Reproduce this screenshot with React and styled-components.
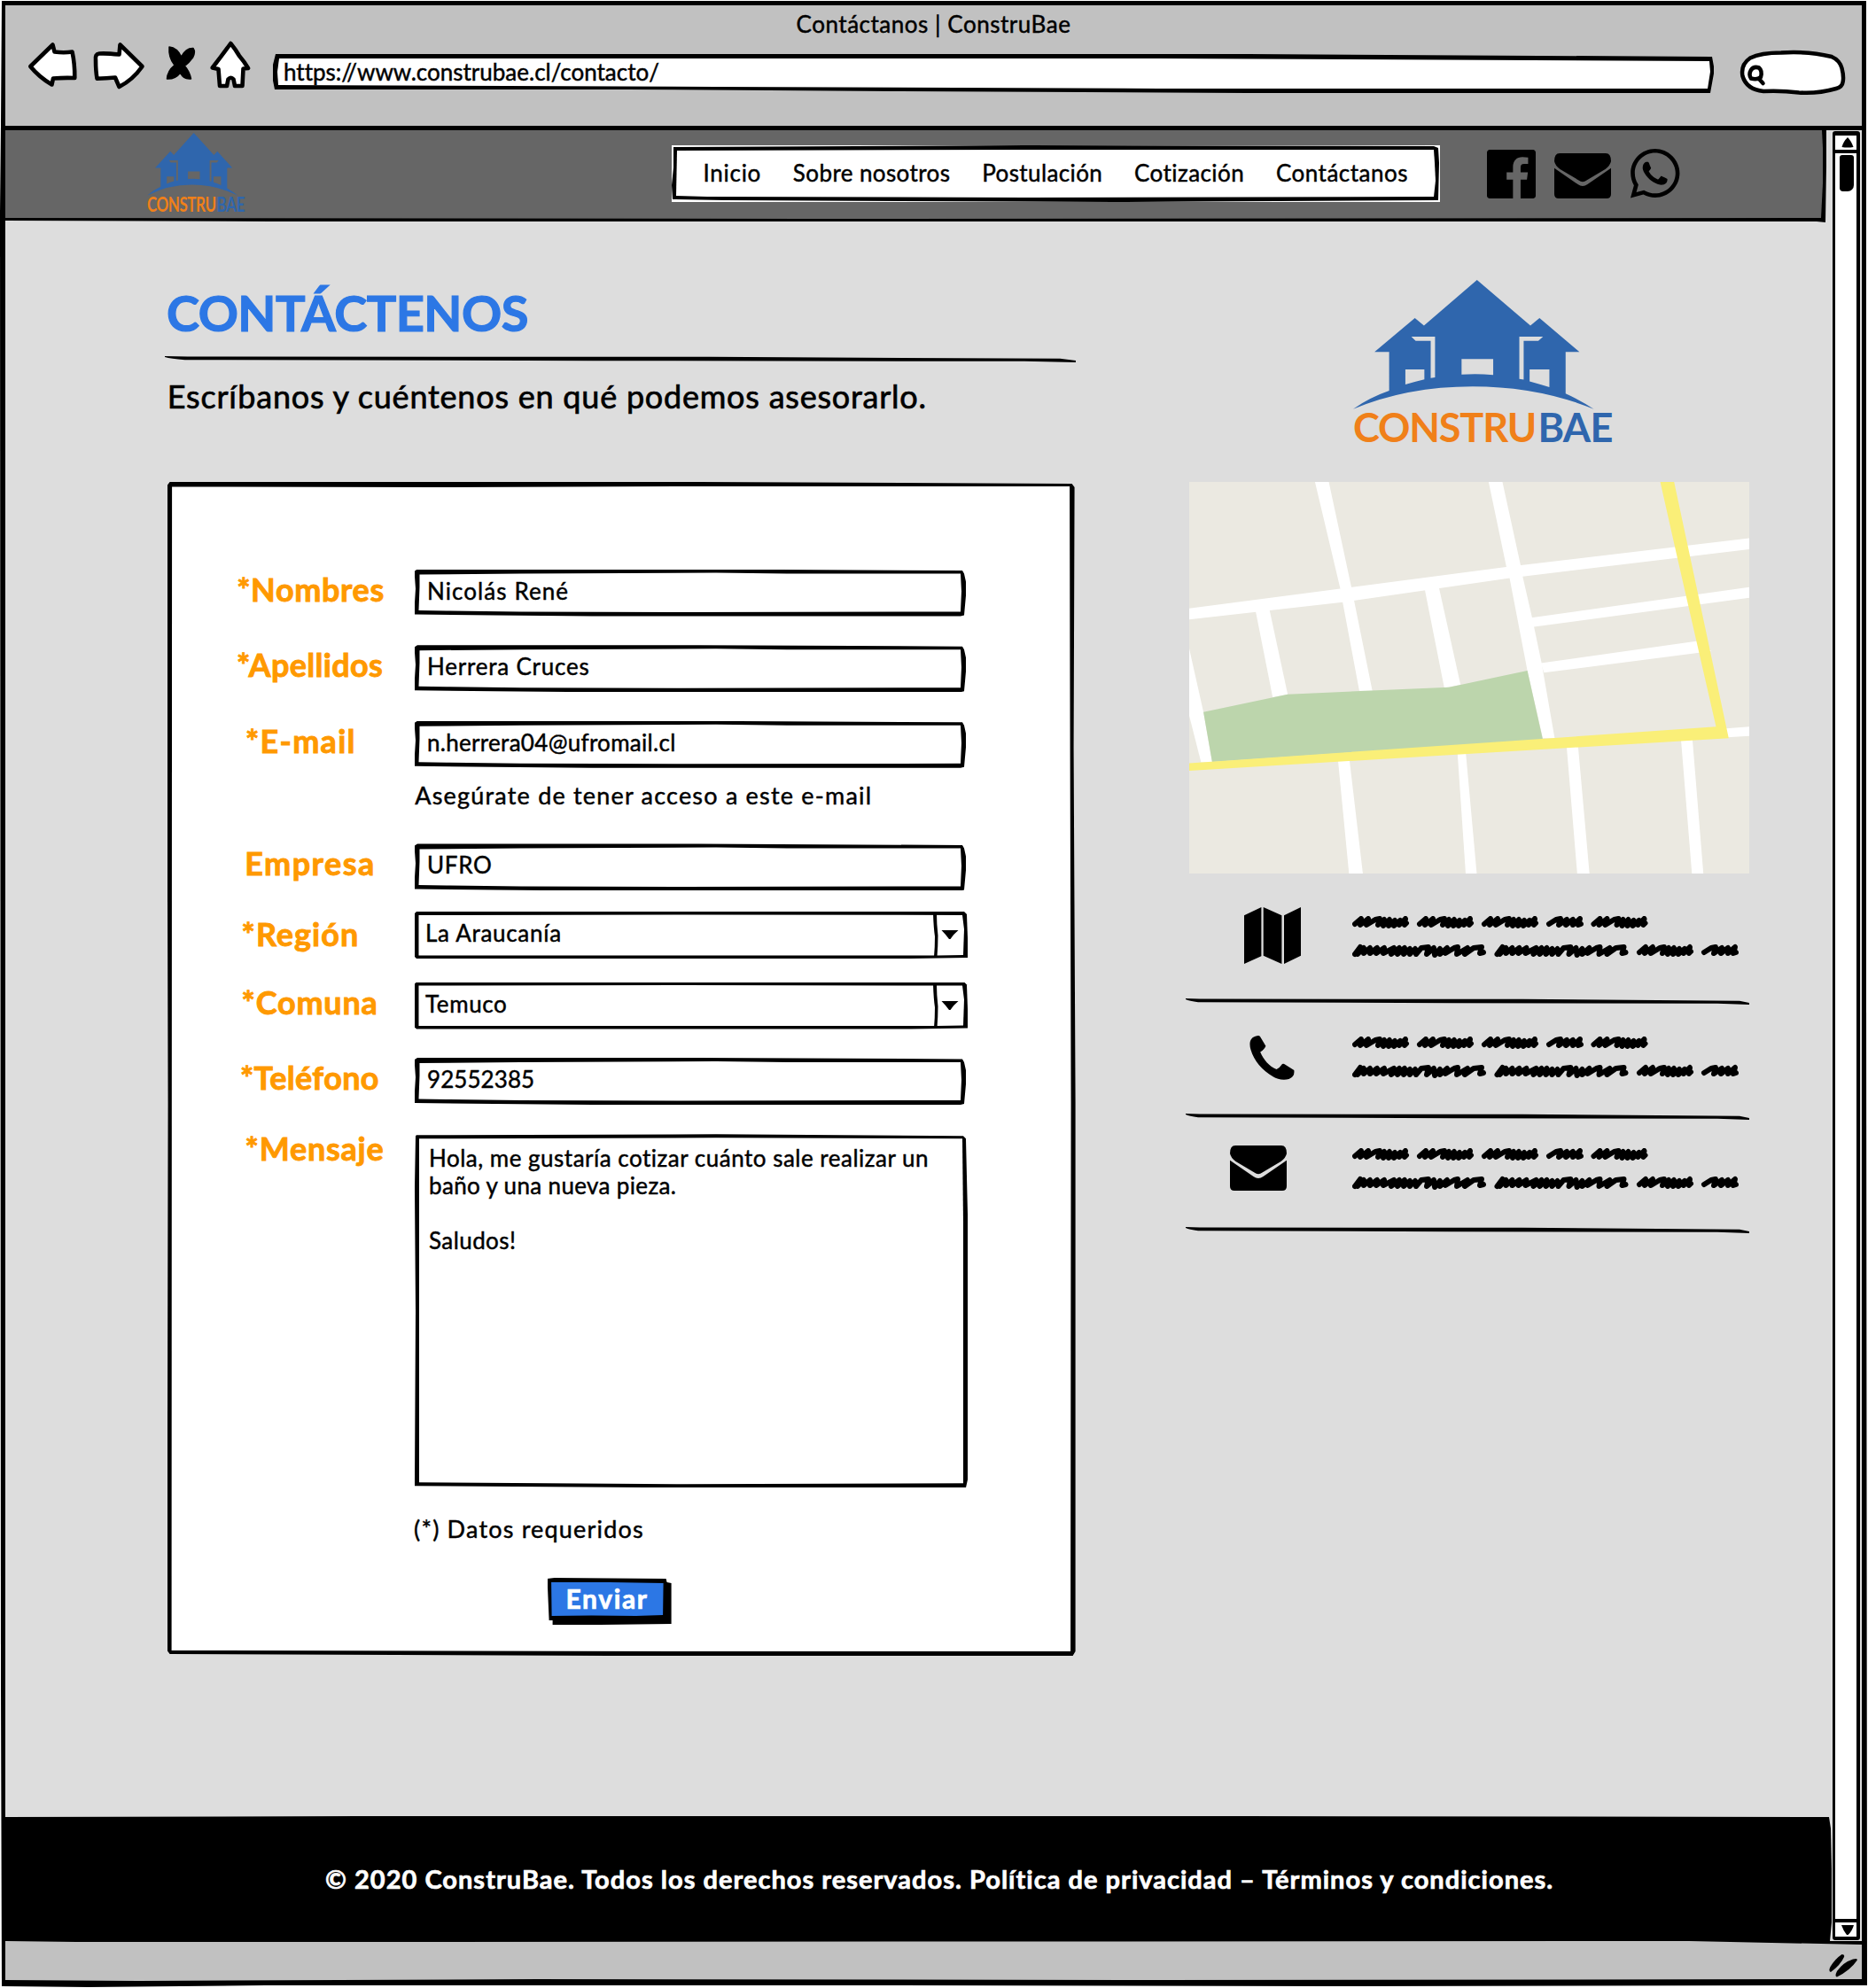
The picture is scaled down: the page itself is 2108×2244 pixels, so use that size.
import React from 'react';
import styled, { createGlobalStyle, css } from 'styled-components';
import { FaWhatsapp } from 'react-icons/fa';

const INK = '#000';
const BLUE = '#2c77e5';
const ORANGE = '#ff9900';
const LOGO_BLUE = '#2f66ad';
const LOGO_ORANGE = '#f08019';

const GlobalStyle = createGlobalStyle`
  * { box-sizing: border-box; }
  body {
    margin: 0;
    background: #fff;
    color: ${INK};
    font-family: Lato, 'Open Sans', sans-serif;
    font-size: 26px;
    font-variant-ligatures: none;
  }
  svg { display: block; flex: none; }
`;

/* Hand-drawn box: a black outer shape with a slightly uneven filled shape on top. */
const sketch = ({ fill, outer, inner }) => css`
  position: relative;
  isolation: isolate;
  &::before,
  &::after {
    content: '';
    position: absolute;
    inset: 0;
    z-index: -1;
  }
  &::before {
    background: ${INK};
    clip-path: polygon(${outer});
  }
  &::after {
    background: ${fill};
    clip-path: polygon(${inner});
  }
`;

const text = css`
  margin: 0;
  white-space: nowrap;
  letter-spacing: ${({ $track = 0.4 }) => $track}px;
  -webkit-text-stroke: 0.45px currentColor;
`;

/* ---------- window ---------- */

const Window = styled.div`
  width: 2108px;
  height: 2244px;
  padding: 6px 7px 8px 6px;
  display: flex;
  flex-direction: column;
  ${sketch({
    fill: 'transparent',
    outer:
      '2px 1px, 2106px 1px, 2106px 1100px, 2107px 2241px, 1500px 2242px, 1000px 2241px, 300px 2241px, 100px 2243px, 2px 2242px, 1px 1900px, 0px 240px, 1px 140px',
    inner: '0 0',
  })}
`;

const Toolbar = styled.header`
  height: 141px;
  background: #c1c1c1;
  border-bottom: 5px solid ${INK};
  flex: none;
`;

const WindowTitle = styled.div`
  ${text}
  height: 39px;
  line-height: 42px;
  text-align: center;
`;

const BrowserRow = styled.div`
  display: flex;
  align-items: flex-start;
  padding-left: 24px;
`;

const ToolIcon = styled.svg`
  width: ${({ $w }) => $w}px;
  height: 56px;
  margin: 1px ${({ $after }) => $after}px 0 0;
  fill: #fff;
  stroke: ${INK};
  stroke-width: 4.6;
  stroke-linejoin: round;
`;

const AddressBar = styled.div`
  ${text}
  width: 1626px;
  height: 45px;
  margin-top: 16px;
  padding-left: 12px;
  line-height: 40px;
  ${sketch({
    fill: '#fff',
    outer:
      '3px 0, 900px 0, 1100px 0, 1624px 3px, 1626px 14px, 1626px 22px, 1622px 44px, 1100px 44px, 700px 42px, 400px 40px, 2px 40px, 0 30px, 0 12px',
    inner:
      '7px 5px, 1000px 5px, 1621px 8px, 1622px 20px, 1619px 39px, 1000px 39px, 500px 37px, 6px 35px, 5px 20px',
  })}
`;

const SearchPill = styled.svg`
  width: 122px;
  height: 54px;
  margin: 10px 0 0 28px;
  fill: #fff;
  stroke: ${INK};
  stroke-width: 4.5;
  stroke-linecap: round;
`;

const Viewport = styled.div`
  flex: 1;
  min-height: 0;
  display: flex;
  background: #ddd;
`;

const Page = styled.div`
  width: 2061px;
  display: flex;
  flex-direction: column;
`;

const StatusBar = styled.div`
  height: 45px;
  flex: none;
  display: flex;
  justify-content: flex-end;
  padding: 14px 3px 0 0;
  ${sketch({
    fill: '#c1c1c1',
    outer: '0 0, 100% 0, 100% 100%, 0 100%',
    inner: '0 0, 80px 1px, 400px 1px, 1900px 0, 2095px 4px, 2095px 43px, 1300px 44px, 600px 43px, 150px 45px, 0 44px',
  })}
`;

/* ---------- scroll bar ---------- */

const Scrollbar = styled.div`
  width: 31px;
  height: 2042px;
  margin: 1px 0 0 1px;
  background: #fff;
  border: 3px solid ${INK};
  border-top-width: 5px;
  border-bottom-width: 4px;
  border-right-width: 4px;
  border-radius: 3px;
  display: flex;
  flex-direction: column;
  align-items: center;
`;

const ScrollArrow = styled.div`
  align-self: stretch;
  height: 20px;
  display: flex;
  align-items: center;
  justify-content: center;
  padding-left: 3px;
  border: 0 solid ${INK};
  border-width: ${({ $down }) => ($down ? '4px 0 0' : '0 0 4px')};
`;

const Thumb = styled.div`
  width: 16px;
  height: 41px;
  margin: 2px 0 auto 2px;
  background: ${INK};
  border-radius: 3px 3px 7px 4px;
`;

/* ---------- site header ---------- */

const SiteHeader = styled.div`
  width: 2055px;
  height: 104px;
  flex: none;
  display: flex;
  align-items: flex-start;
  padding: 3px 0 0 160px;
  ${sketch({
    fill: '#666',
    outer: '0 0, 2055px 0, 2055px 40px, 2054px 104px, 2044px 103px, 300px 103px, 0 102px',
    inner: '0 0, 2050px 0, 2051px 20px, 2051px 60px, 2049px 99px, 900px 100px, 0 99px',
  })}
`;

const Menu = styled.nav`
  width: 867px;
  height: 64px;
  margin: 14px 53px 0 482px;
  padding-left: 35.5px;
  display: flex;
  gap: 35.8px;
  background: #fff;
  ${sketch({
    fill: '#fff',
    outer: '2px 2px, 400px 0, 860px 1px, 865px 3px, 866px 20px, 865px 62px, 500px 64px, 60px 62px, 1px 61px, 0 45px, 2px 25px',
    inner: '6px 6px, 400px 5px, 860px 5px, 861px 20px, 862px 40px, 860px 58px, 400px 59px, 40px 58px, 5px 57px',
  })}
`;

const MenuItem = styled.a`
  ${text}
  line-height: 62px;
`;

const SocialLinks = styled.div`
  display: flex;
  align-items: flex-start;
  padding-top: 19px;
`;

const Facebook = styled.svg`
  width: 55px;
  height: 55px;
  margin-right: 21px;
`;

const Envelope = styled.svg`
  width: 64px;
  height: 51px;
`;

const HeaderEnvelope = styled(Envelope)`
  margin: 4px 18px 0 0;
`;

const WhatsappSlot = styled.span`
  display: flex;
  margin-top: -5px;
`;

/* ---------- main ---------- */

const Main = styled.main`
  flex: 1;
  display: flex;
  align-items: flex-start;
  gap: 124px;
  padding: 65px 0 0 180px;
`;

const FormColumn = styled.section`
  width: 1028px;
`;

const Heading = styled.h1`
  ${text}
  -webkit-text-stroke-width: 1.2px;
  height: 86px;
  padding-left: 2px;
  color: ${BLUE};
  font-size: 56px;
  font-weight: 700;
  line-height: 73px;
`;

const Rule = styled.svg`
  width: 100%;
  height: 7px;
`;

const Lead = styled.p`
  ${text}
  -webkit-text-stroke-width: 0.7px;
  padding-left: 2.8px;
  margin: 16px 0 75px;
  font-size: 36px;
  line-height: 44px;
`;

const Card = styled.form`
  width: 1025px;
  height: 1325px;
  margin-left: 2.6px;
  padding-top: 98.5px;
  ${sketch({
    fill: '#fff',
    outer:
      '3px 0, 600px 0, 1021px 2px, 1024px 6px, 1023px 300px, 1025px 700px, 1025px 1320px, 1022px 1325px, 500px 1325px, 3px 1323px, 0 1319px, 1px 700px, 0 300px, 0 4px',
    inner: '5.5px 5.5px, 300px 6px, 600px 5px, 1018.5px 5px, 1019px 300px, 1020px 700px, 1019.5px 1320px, 600px 1320px, 5px 1319px',
  })}
`;

const FormRow = styled.div`
  display: grid;
  grid-template-columns: 279.4px 624px;
  margin-bottom: ${({ $after }) => $after}px;
`;

const Label = styled.label`
  ${text}
  -webkit-text-stroke-width: 0.9px;
  padding-left: ${({ $indent }) => $indent}px;
  margin-top: ${({ $shift = 0 }) => $shift}px;
  color: ${ORANGE};
  font-size: 36px;
  font-weight: 700;
  line-height: 45px;
  height: 45px;
`;

const Field = styled.div`
  ${text}
  width: 622px;
  height: 53px;
  padding-left: 14px;
  line-height: 49px;
  ${sketch({
    fill: '#fff',
    outer:
      '3px 0, 320px 0, 618px 1.5px, 620px 5px, 622px 14px, 622px 30px, 620px 52px, 616px 53px, 200px 53px, 90px 52px, 0 51px, 0 38px, 1px 22px, 0 8px, 0 2px',
    inner:
      '5.5px 6px, 120px 5px, 340px 4px, 420px 5px, 616px 5px, 617px 25px, 616px 48px, 300px 48.5px, 120px 48px, 36px 47px, 4.5px 46.5px, 5.5px 20px',
  })}
`;

const Select = styled.div`
  width: 624px;
  height: 53px;
  display: flex;
  ${sketch({
    fill: '#fff',
    outer: '2px 0, 620px 0, 623px 3px, 624px 30px, 624px 52px, 560px 53px, 2px 53px, 0 51px, 0 2px',
    inner: '4.5px 4px, 300px 3.5px, 618px 4px, 620px 20px, 619px 49px, 590px 49.5px, 4.5px 49.5px',
  })}
`;

const SelectValue = styled.span`
  ${text}
  flex: 1;
  padding-left: 12px;
  line-height: 48px;
`;

const Caret = styled.svg`
  width: 39px;
  height: 53px;
`;

const TextArea = styled.div`
  width: 624px;
  height: 399px;
  padding: 11.5px 0 0 16px;
  ${sketch({
    fill: '#fff',
    outer:
      '2px 1px, 340px 0, 619px 2px, 622px 5px, 624px 90px, 624px 200px, 624px 390px, 622px 399px, 300px 399px, 0 397px, 1px 200px, 0 60px, 1px 2px',
    inner: '5px 5px, 340px 4px, 618px 5px, 619px 100px, 619px 200px, 619px 394px, 300px 395px, 5px 393px, 5px 200px',
  })}
`;

const MessageLine = styled.div`
  ${text}
  height: 31.2px;
  line-height: 31.2px;
`;

const Hint = styled.p`
  ${text}
  padding-left: ${({ $indent }) => $indent}px;
  margin: 0 0 ${({ $after }) => $after}px;
  font-size: 27px;
  line-height: 34px;
`;

const SubmitButton = styled.div`
  ${text}
  -webkit-text-stroke-width: 0.7px;
  width: 141px;
  height: 53px;
  margin-left: 429px;
  padding-left: 21px;
  color: #fff;
  font-size: 30px;
  font-weight: 700;
  line-height: 47px;
  ${sketch({
    fill: BLUE,
    outer:
      '0 1px, 8px 0, 134px 1px, 135px 5px, 140px 6px, 140px 52px, 60px 53px, 6px 53px, 6px 48px, 2px 48px, 1px 25px',
    inner: '4.5px 5px, 70px 5px, 131px 6px, 130.5px 42px, 100px 43px, 50px 42.5px, 5px 43px',
  })}
`;

/* ---------- side column ---------- */

const SideColumn = styled.aside`
  width: 636px;
`;

const BigLogoSlot = styled.div`
  padding: 0 0 43px 188.7px;
`;

const LogoDrawing = styled.svg`
  overflow: visible;
  font-family: Lato, 'Open Sans', sans-serif;
  font-size: 101px;
  font-weight: 700;
`;

const MapView = styled.svg`
  width: 632px;
  height: 442px;
  margin-left: 4px;
`;

const ContactItem = styled.div`
  height: ${({ $h }) => $h}px;
  display: grid;
  grid-template-columns: 188px 1fr;
  align-items: start;
`;

const ContactIcon = styled.div`
  padding: ${({ $y }) => $y}px 0 0 ${({ $x }) => $x}px;
`;

const ContactText = styled.svg`
  width: 440px;
  height: 48px;
  margin-top: ${({ $y }) => $y}px;
  fill: none;
  stroke: ${INK};
  stroke-width: 6;
  stroke-linecap: round;
  stroke-linejoin: round;
`;

const Footer = styled.footer`
  ${text}
  -webkit-text-stroke-width: 0.7px;
  height: 141px;
  flex: none;
  padding-left: 361px;
  color: #fff;
  font-size: 29px;
  font-weight: 700;
  line-height: 142px;
  ${sketch({
    fill: 'transparent',
    outer: '0 1px, 400px 0, 1400px 0, 2058px 1px, 2060px 14px, 2061px 60px, 2061px 120px, 2059px 141px, 0 141px',
    inner: '0 0',
  })}
`;

/* ---------- drawings ---------- */

function Logo({ width, height }) {
  return (
    <LogoDrawing width={width} height={height} viewBox="463 58 654 414" preserveAspectRatio="none">
      <path
        fill={LOGO_BLUE}
        fillRule="evenodd"
        d="M776 58 L911 173 L934 154 L1035 240 H1000 V345 Q1040 363 1071 384 Q930 327 765 327 Q600 327 463 384 Q505 355 554 338 V240 H517 L619 154 L642 173 Z
          M610 201 H670 V304 L659 306 V212 H621 Z
          M943 201 H883 V308 L894 310 V212 H931 Z
          M737 258 H817 V298 Q776 294 737 297 Z
          M595 284 H643 V309 Q618 315 595 322 Z
          M909 284 H959 V329 Q935 321 909 314 Z"
      />
      <text x="463" y="468" textLength="464" lengthAdjust="spacing" fill={LOGO_ORANGE}>
        CONSTRU
      </text>
      <text x="930" y="468" textLength="190" lengthAdjust="spacing" fill={LOGO_BLUE}>
        BAE
      </text>
    </LogoDrawing>
  );
}

function EnvelopeShape() {
  return (
    <>
      <path d="M0 9 Q0 0 6 0 H58 Q64 0 64 9 Q63 14 57.5 18 L36.500 30.500 Q32 34 27.500 30.500 L6.500 18 Q1 14 0 9Z" />
      <path d="M0 16.800 L26.500 35 Q32 39 37.500 35 L64 16.800 V46 Q64 51 59 51 H5 Q0 51 0 46Z" />
    </>
  );
}

const MapIcon = () => (
  <svg width="64" height="64" viewBox="0 0 64 64">
    <path d="M0 9.3 L19.4 0 V55.3 L0 64Z M21.7 0 L42.4 9.3 V64 L21.7 54.7Z M45 9.3 L64 0 V54.7 L45 64Z" />
  </svg>
);

const PhoneIcon = () => (
  <svg width="51" height="50" viewBox="0 0 51 50">
    <path d="M8.5 .3 Q11 -.5 12.3 1.5 L18.4 11.7 Q17 15.5 12.2 18.5 C16 27 22 34.5 30.5 38 Q34 36.5 37 32 Q38.8 31.3 40 32.5 L50.3 39 Q51.5 46 44.5 49 C38 51 31 49 27 46.5 C14 39 5 28 1.5 16 C-1 8 1 1.5 8.5 .3Z" />
  </svg>
);

const WORDS = {
  short: 'M3 9 L11 4 L16 3 L14 10 L23 4 L22 10 L30 4 L30 10 L38 3 L36 10 L39 9',
  mid: 'M3 9 L10 3 L9 10 L18 3 L16 10 L26 4 L31 3 L29 10 L36 4 L35 11 L42 4 L41 11 L48 5 L47 11 L54 5 L53 10 L60 3 L59 10 L61 8',
  long: 'M3 11 L9 3 L6 11 L13 4 L13 10 L20 4 L20 10 L28 4 L27 10 L36 4 L35 10 L47 4 L44 11 L53 4 L51 11 L59 4 L58 11 L65 5 L65 11 L71 5 L72 11 L78 4 L86 3 L84 11 L92 4 L93 12 L99 5 L99 11 L107 4 L105 10 L115 4 L119 3 L118 11 L130 4 L127 11 L137 4 L146 3 L144 10 L148 9',
};

const SCRIBBLE = [
  ['mid', 0, 0],
  ['mid', 73, 0],
  ['mid', 146, 0],
  ['short', 219, 0],
  ['mid', 269.5, 0],
  ['long', 0, 32],
  ['long', 160.5, 32],
  ['mid', 321, 32],
  ['short', 394, 32],
];

function Contact({ h, x, y, textY, children }) {
  return (
    <ContactItem $h={h}>
      <ContactIcon $x={x} $y={y}>
        {children}
      </ContactIcon>
      <ContactText $y={textY} viewBox="0 0 440 48">
        {SCRIBBLE.map(([word, wx, wy]) => (
          <path key={`${wx}-${wy}`} d={WORDS[word]} transform={`translate(${wx} ${wy})`} />
        ))}
      </ContactText>
    </ContactItem>
  );
}

const Divider = () => (
  <Rule viewBox="0 0 636 7" preserveAspectRatio="none">
    <path d="M0 0 L16 .6 L380 .8 L625 2.8 L636 5 V6.9 L600 5.800 L300 5.200 L14 4.200 Q4 3 0 1Z" />
  </Rule>
);

function StreetMap() {
  return (
    <MapView viewBox="49 569 1416 990" preserveAspectRatio="none">
      <rect x="49" y="569" width="1416" height="990" fill="#ebe9e1" />
      <g fill="#fff">
        <path d="M49 889 L431 839 L850 784 L1465 711 V739 L860 812 L437 873 L49 917Z" />
        <path d="M367 569 H402 L459 835 L512 1097 H479 L437 873 L431 839Z" />
        <path d="M806 569 H841 L887 780 L893 812 L916 912 L940 1027 L973 1217 H943 L904 1046 L859 812 L851 784Z" />
        <path d="M217 896 L252 892 L298 1106 L260 1113Z" />
        <path d="M644 838 L680 834 L735 1082 L694 1090Z" />
        <path d="M914 912 L1465 835 V862 L917 936Z" />
        <path d="M938 1027 L1335 971 L1369 997 L946 1051Z" />
        <path d="M49 990 L85 1151 L107 1278 H79 L49 1160Z" />
        <path d="M1400 1193 L1465 1188 V1211 L1400 1215Z" />
        <path d="M425 1270 H454 L488 1559 H453Z" />
        <path d="M727 1250 H748 L776 1559 H748Z" />
        <path d="M1003 1235 H1032 L1061 1559 H1030Z" />
        <path d="M1292 1215 H1321 L1349 1559 H1320Z" />
      </g>
      <path fill="#bcd5ac" d="M85 1151 L298 1106 L706 1088 L904 1046 L943 1220 L107 1277Z" />
      <path fill="#faef78" d="M1240 569 H1275 L1312 742 L1413 1217 L49 1299 V1280 L1381 1188 L1283 760Z" />
    </MapView>
  );
}

function TextField({ label, indent, shift, labelTrack, value, track, after }) {
  return (
    <FormRow $after={after}>
      <Label $indent={indent} $shift={shift} $track={labelTrack}>
        {label}
      </Label>
      <Field $track={track}>{value}</Field>
    </FormRow>
  );
}

function SelectField({ label, indent, shift, labelTrack, value, track, after }) {
  return (
    <FormRow $after={after}>
      <Label $indent={indent} $shift={shift} $track={labelTrack}>
        {label}
      </Label>
      <Select>
        <SelectValue $track={track}>{value}</SelectValue>
        <Caret viewBox="0 0 39 53">
          <path d="M0 2 Q.5 18 2 28 Q2 40 1 51 H4.500 Q5.500 38 5.500 27 Q4 14 4 2Z" />
          <path d="M9.500 21 H28.500 Q23.500 25 19.500 31 H18 Q13.500 25 9.500 21Z" />
        </Caret>
      </Select>
    </FormRow>
  );
}

const MENU = [
  ['Inicio', 0.72],
  ['Sobre nosotros', 0.4],
  ['Postulación', 0.4],
  ['Cotización', 0.43],
  ['Contáctanos', 0.5],
];

export default function App() {
  return (
    <>
      <GlobalStyle />
      <Window>
        <Toolbar>
          <WindowTitle $track={0.52}>Contáctanos | ConstruBae</WindowTitle>
          <BrowserRow>
            <ToolIcon $w={60} $after={14} viewBox="30 46 60 56">
              <path d="M34.3 75 L59.5 50.5 L61.5 58.5 Q72 60 81.5 58.5 Q84.5 72 84.3 88 Q72 87.5 60 88.5 L58.5 95.5 Q44 87 34.3 75Z" />
            </ToolIcon>
            <ToolIcon $w={60} $after={20} viewBox="104 46 60 56">
              <path d="M160.5 75 L135.5 50.5 L134.5 61.5 Q120 60 112 60.5 Q107 61 108 68 Q108 80 109.5 88.7 Q120 88.5 130 87.5 L134.5 98 Q150 90 160.5 75Z" />
            </ToolIcon>
            <ToolIcon $w={40} $after={12} viewBox="184 46 40 56">
              <path
                fill={INK}
                strokeWidth="1.5"
                d="M191 53 Q200 54 204.5 64 Q210 54 218 54.500 Q221 59 217.500 65 Q213 71 208.500 74.500 Q214 81 215.500 89 Q207 90 203.500 82 Q198 89.500 188.500 89 Q189 80 197 73.500 Q190 65 191 53Z"
              />
            </ToolIcon>
            <ToolIcon $w={48} $after={24} viewBox="236 46 48 56">
              <path d="M260.3 49 Q266 56 270 63 Q276 70 280 77 L274.5 77.5 L273.5 97 H265 L263.5 89.5 Q260.5 86 257.5 89.5 L256 97 H248 L246.5 78 L239.7 76.5 Q251 62 260.3 49Z" />
            </ToolIcon>
            <AddressBar $track={0}>https://www.construbae.cl/contacto/</AddressBar>
            <SearchPill viewBox="1962 55 122 54">
              <path d="M1990 103 Q1971 101 1966.500 86 Q1964 73 1975 65.500 Q1987 59.500 2010 59.500 Q2040 57.500 2067 64 Q2076 68 2078.500 77 Q2081 87 2079.500 93 Q2079 98 2072 100 Q2051 106 2030 104.500 Q2010 102 1990 103Z" />
              <path d="M1976 79 Q1979 74.500 1985 76.500 Q1989 80 1987 87 Q1983 90.500 1976 88.500 Q1973 84 1976 79Z M1985 89 L1989.500 94" />
            </SearchPill>
          </BrowserRow>
        </Toolbar>

        <Viewport>
          <Page>
            <SiteHeader>
              <Logo width={110} height={90} />
              <Menu>
                {MENU.map(([item, track]) => (
                  <MenuItem key={item} $track={track}>
                    {item}
                  </MenuItem>
                ))}
              </Menu>
              <SocialLinks>
                <Facebook viewBox="0 0 1536 1536">
                  <path d="M1451 0q35 0 60 25t25 60v1366q0 35-25 60t-60 25h-391v-595h199l30-232h-229v-148q0-56 23.5-84t91.5-28l122-1v-207q-63-9-178-9-136 0-217.500 80t-81.500 226v171h-200v232h200v595h-735q-35 0-60-25t-25-60v-1366q0-35 25-60t60-25h1366z" />
                </Facebook>
                <HeaderEnvelope viewBox="0 0 64 51">
                  <EnvelopeShape />
                </HeaderEnvelope>
                <WhatsappSlot>
                  <FaWhatsapp size={63.4} />
                </WhatsappSlot>
              </SocialLinks>
            </SiteHeader>

            <Main>
              <FormColumn>
                <Heading $track={-0.55}>CONTÁCTENOS</Heading>
                <Divider />
                <Lead $track={0.77}>Escríbanos y cuéntenos en qué podemos asesorarlo.</Lead>
                <Card>
                  <TextField label="*Nombres" indent={78.6} labelTrack={0.63} value="Nicolás René" track={1.08} after={32.7} />
                  <TextField label="*Apellidos" indent={78.4} labelTrack={0.33} value="Herrera Cruces" track={0.79} after={32.6} />
                  <TextField
                    label="*E-mail"
                    indent={88.3}
                    labelTrack={1.28}
                    value="n.herrera04@ufromail.cl"
                    track={0.3}
                    after={14}
                  />
                  <Hint $indent={279.6} $after={37.7} $track={1.2}>
                    Asegúrate de tener acceso a este e-mail
                  </Hint>
                  <TextField label="Empresa" indent={87.6} labelTrack={1.5} value="UFRO" track={0.69} after={23.5} />
                  <SelectField
                    label="*Región"
                    indent={84}
                    shift={3}
                    labelTrack={1}
                    value="La Araucanía"
                    track={0.71}
                    after={26.6}
                  />
                  <SelectField label="*Comuna" indent={84} labelTrack={0.8} value="Temuco" track={0.63} after={32.4} />
                  <TextField label="*Teléfono" indent={82.4} labelTrack={0.34} value="92552385" track={0.08} after={33.4} />
                  <FormRow $after={29.5}>
                    <Label $indent={88} $shift={-6} $track={0.77}>
                      *Mensaje
                    </Label>
                    <TextArea>
                      <MessageLine $track={0.5}>Hola, me gustaría cotizar cuánto sale realizar un</MessageLine>
                      <MessageLine $track={0.35}>baño y una nueva pieza.</MessageLine>
                      <MessageLine />
                      <MessageLine $track={0.42}>Saludos!</MessageLine>
                    </TextArea>
                  </FormRow>
                  <Hint $indent={278.5} $after={38.1} $track={1.18}>
                    (*) Datos requeridos
                  </Hint>
                  <SubmitButton $track={1.6}>Enviar</SubmitButton>
                </Card>
              </FormColumn>

              <SideColumn>
                <BigLogoSlot>
                  <Logo width={292} height={185} />
                </BigLogoSlot>
                <StreetMap />
                <Contact h={140.7} x={66} y={38} textY={47.5}>
                  <MapIcon />
                </Contact>
                <Divider />
                <Contact h={123} x={72} y={35.5} textY={36}>
                  <PhoneIcon />
                </Contact>
                <Divider />
                <Contact h={121.3} x={50} y={29.5} textY={32}>
                  <Envelope viewBox="0 0 64 51">
                    <EnvelopeShape />
                  </Envelope>
                </Contact>
                <Divider />
              </SideColumn>
            </Main>

            <Footer $track={1.02}>
              © 2020 ConstruBae. Todos los derechos reservados. Política de privacidad – Términos y condiciones.
            </Footer>
          </Page>

          <Scrollbar>
            <ScrollArrow>
              <svg width="14" height="12" viewBox="0 0 14 12">
                <path d="M7 0 Q11 4 13.500 11 Q7 12 .5 11 Q2 5 7 0Z" />
              </svg>
            </ScrollArrow>
            <Thumb />
            <ScrollArrow $down>
              <svg width="14" height="12" viewBox="0 0 14 12">
                <path d="M0 1 H14 Q12 8 7.500 12 H6 Q2 7 0 1Z" />
              </svg>
            </ScrollArrow>
          </Scrollbar>
        </Viewport>

        <StatusBar>
          <svg width="34" height="27" viewBox="0 0 34 27">
            <path d="M14.500 1 Q18 1 17 4 Q13 13 2 21 Q-1 20 1.500 15 Q7 6 14.500 1Z M27 6.500 Q33 5 31.500 8 Q24 19 9 26.500 Q6 26 9 20 Q16 10 27 6.500Z" />
          </svg>
        </StatusBar>
      </Window>
    </>
  );
}
